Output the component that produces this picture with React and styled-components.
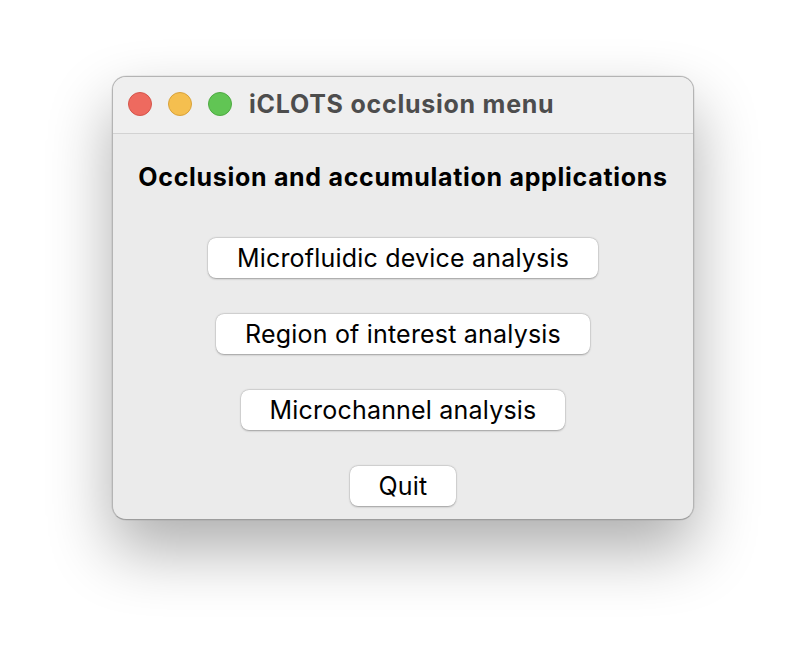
import React from "react";
import styled, { createGlobalStyle } from "styled-components";

const GlobalStyle = createGlobalStyle`
  html, body {
    margin: 0;
    padding: 0;
    background: #ffffff;
  }
  body {
    font-family: Inter, "Liberation Sans", Arial, sans-serif;
  }
`;

const buttons = [
  "Microfluidic device analysis",
  "Region of interest analysis",
  "Microchannel analysis",
  "Quit",
];

export default function App() {
  return (
    <>
      <GlobalStyle />
      <Page>
        <Window>
          <TitleBar>
            <Lights>
              <Light color="#ee6a5f" border="#d5554b" />
              <Light color="#f5bf4f" border="#d9a23a" />
              <Light color="#61c554" border="#4eaa42" />
            </Lights>
            <Title>iCLOTS occlusion menu</Title>
          </TitleBar>

          <Content>
            <Heading>Occlusion and accumulation applications</Heading>
            <ButtonList>
              {buttons.map((label) => (
                <MenuButton key={label}>{label}</MenuButton>
              ))}
            </ButtonList>
          </Content>
        </Window>
      </Page>
    </>
  );
}

const Page = styled.div`
  width: 806px;
  height: 668px;
  display: flex;
  justify-content: center;
  align-items: flex-start;
  padding-top: 76px;
  box-sizing: border-box;
`;

const Window = styled.div`
  width: 582px;
  height: 444px;
  box-sizing: border-box;
  background: #ebebeb;
  border-radius: 14px;
  border: 1px solid #b4b4b4;
  border-bottom-color: #9c9c9c;
  box-shadow: 0 30px 64px rgba(0, 0, 0, 0.32), 0 0 0 0.5px rgba(0, 0, 0, 0.1);
  overflow: hidden;
  display: flex;
  flex-direction: column;
`;

const TitleBar = styled.div`
  height: 57px;
  flex-shrink: 0;
  display: flex;
  align-items: center;
  padding-left: 15px;
  padding-bottom: 2px;
  background: #efefef;
  border-bottom: 1px solid #d2d2d2;
  box-sizing: border-box;
`;

const Lights = styled.div`
  display: flex;
  gap: 16px;
  margin-right: 17px;
`;

const Light = styled.span`
  width: 24px;
  height: 24px;
  border-radius: 50%;
  box-sizing: border-box;
  background: ${({ color }) => color};
  border: 1px solid ${({ border }) => border};
`;

const Title = styled.div`
  font-size: 25px;
  font-weight: 700;
  letter-spacing: 0.75px;
  color: #4d4d4d;
  margin-top: -1px;
`;

const Content = styled.div`
  display: flex;
  flex-direction: column;
  align-items: center;
  padding-top: 30px;
`;

const Heading = styled.div`
  font-size: 25px;
  font-weight: 700;
  letter-spacing: 0.7px;
  color: #000;
  line-height: 28px;
  margin-top: -1px;
  margin-bottom: 47px;
`;

const ButtonList = styled.div`
  display: flex;
  flex-direction: column;
  align-items: center;
  gap: 36px;
`;

const MenuButton = styled.div`
  height: 40px;
  box-sizing: border-box;
  padding: 0 29px;
  display: flex;
  align-items: center;
  background: #ffffff;
  border-radius: 8px;
  box-shadow: 0 0.5px 2px rgba(0, 0, 0, 0.3), 0 0 0 0.5px rgba(0, 0, 0, 0.08);
  font-size: 25px;
  letter-spacing: 0.2px;
  color: #000;
`;
